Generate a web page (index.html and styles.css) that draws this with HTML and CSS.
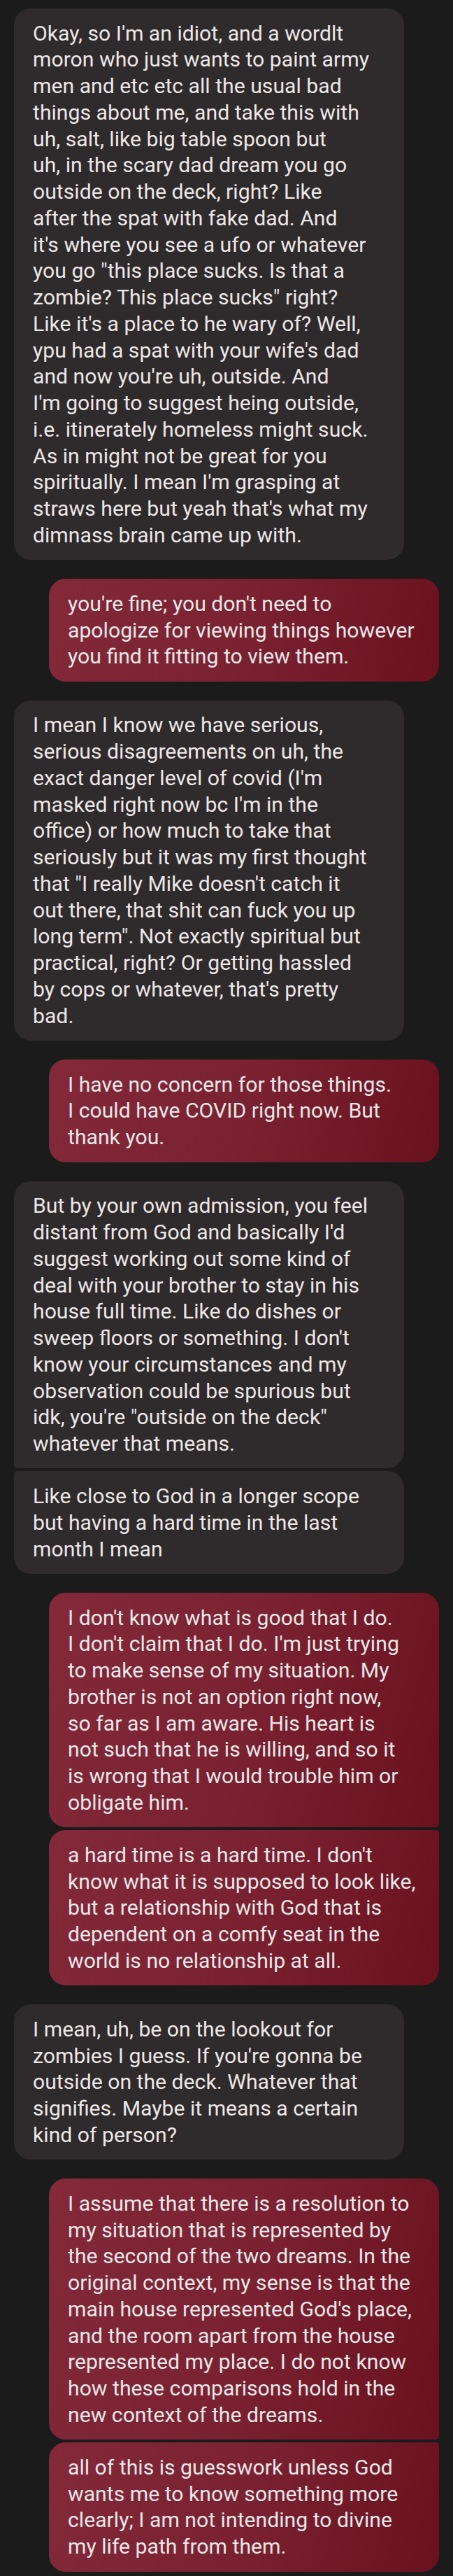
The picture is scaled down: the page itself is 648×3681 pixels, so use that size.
FILE: index.html
```html
<!DOCTYPE html>
<html lang="en">
<head>
<meta charset="utf-8">
<title>Chat</title>
<link rel="stylesheet" href="styles.css">
</head>
<body>
<main class="thread">
  <div class="msg in solo">Okay, so I'm an idiot, and a wordlt<br>moron who just wants to paint army<br>men and etc etc all the usual bad<br>things about me, and take this with<br>uh, salt, like big table spoon but<br>uh, in the scary dad dream you go<br>outside on the deck, right? Like<br>after the spat with fake dad. And<br>it's where you see a ufo or whatever<br>you go "this place sucks. Is that a<br>zombie? This place sucks" right?<br>Like it's a place to he wary of? Well,<br>ypu had a spat with your wife's dad<br>and now you're uh, outside. And<br>I'm going to suggest heing outside,<br>i.e. itinerately homeless might suck.<br>As in might not be great for you<br>spiritually. I mean I'm grasping at<br>straws here but yeah that's what my<br>dimnass brain came up with.</div>

  <div class="msg out solo">you're fine; you don't need to<br>apologize for viewing things however<br>you find it fitting to view them.</div>

  <div class="msg in solo">I mean I know we have serious,<br>serious disagreements on uh, the<br>exact danger level of covid (I'm<br>masked right now bc I'm in the<br>office) or how much to take that<br>seriously but it was my first thought<br>that "I really Mike doesn't catch it<br>out there, that shit can fuck you up<br>long term". Not exactly spiritual but<br>practical, right? Or getting hassled<br>by cops or whatever, that's pretty<br>bad.</div>

  <div class="msg out solo">I have no concern for those things.<br>I could have COVID right now. But<br>thank you.</div>

  <div class="msg in first">But by your own admission, you feel<br>distant from God and basically I'd<br>suggest working out some kind of<br>deal with your brother to stay in his<br>house full time. Like do dishes or<br>sweep floors or something. I don't<br>know your circumstances and my<br>observation could be spurious but<br>idk, you're "outside on the deck"<br>whatever that means.</div>
  <div class="msg in last">Like close to God in a longer scope<br>but having a hard time in the last<br>month I mean</div>

  <div class="msg out first">I don't know what is good that I do.<br>I don't claim that I do. I'm just trying<br>to make sense of my situation. My<br>brother is not an option right now,<br>so far as I am aware. His heart is<br>not such that he is willing, and so it<br>is wrong that I would trouble him or<br>obligate him.</div>
  <div class="msg out last">a hard time is a hard time. I don't<br>know what it is supposed to look like,<br>but a relationship with God that is<br>dependent on a comfy seat in the<br>world is no relationship at all.</div>

  <div class="msg in solo">I mean, uh, be on the lookout for<br>zombies I guess. If you're gonna be<br>outside on the deck. Whatever that<br>signifies. Maybe it means a certain<br>kind of person?</div>

  <div class="msg out first">I assume that there is a resolution to<br>my situation that is represented by<br>the second of the two dreams. In the<br>original context, my sense is that the<br>main house represented God's place,<br>and the room apart from the house<br>represented my place. I do not know<br>how these comparisons hold in the<br>new context of the dreams.</div>
  <div class="msg out last">all of this is guesswork unless God<br>wants me to know something more<br>clearly; I am not intending to divine<br>my life path from them.</div>
</main>
</body>
</html>
```
FILE: styles.css
```css
html, body {
  margin: 0;
  padding: 0;
  background: #1b1b1b;
}

body {
  font-family: Roboto, "Noto Sans", "Liberation Sans", sans-serif;
  color: #ede7e7;
}

.thread {
  display: flex;
  flex-direction: column;
  padding: 12px 20px 11px 20px;
}

.msg {
  box-sizing: border-box;
  width: 558px;
  padding: 16.65px 27px;
  font-size: 30.2px;
  line-height: 37.75px;
  white-space: nowrap;
  border-radius: 24px;
  margin-top: 27px;
}

.msg:first-child {
  margin-top: 0;
}

.msg.last {
  margin-top: 4px;
}

.in {
  align-self: flex-start;
  background: #2f2a2b;
}

.out {
  align-self: flex-end;
  background: linear-gradient(105deg, #83293a 0%, #7a2231 50%, #6a1120 100%);
}

.in.first {
  border-bottom-left-radius: 5px;
}

.in.last {
  border-top-left-radius: 5px;
}

.out.first {
  border-bottom-right-radius: 5px;
}

.out.last {
  border-top-right-radius: 5px;
}
```
